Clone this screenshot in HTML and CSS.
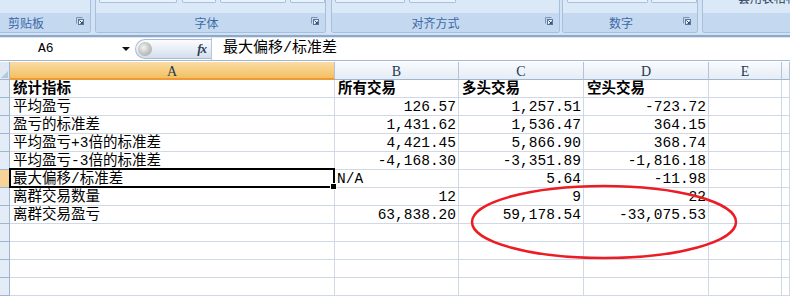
FILE: index.html
```html
<!DOCTYPE html>
<html lang="zh">
<head>
<meta charset="utf-8">
<title>Excel</title>
<link rel="stylesheet" href="styles.css">
</head>
<body>
<div class="ribbon">
  <div class="group g1">
    <div class="gtop"></div>
    <div class="glabel"><span class="lbl l1">剪贴板</span><svg class="launch" width="8" height="8" viewBox="0 0 8 8"><path d="M0.5 6.5V0.5H6.5" fill="none" stroke="#7d93b2"/><rect x="2.5" y="2.5" width="5" height="5" fill="#e9f0f9" stroke="#5b7399"/><path d="M3.5 3.5L6.5 6.5M6.5 4.5V6.5H4.5" fill="none" stroke="#2d4f80"/></svg></div>
  </div>
  <div class="group g2">
    <div class="gtop"><i class="btn" style="margin-left:3px;width:78px"></i><i class="btn" style="margin-left:5px;width:33px"></i><i class="btn" style="margin-left:4px;width:66px"></i><i class="btn" style="margin-left:4px;width:34px"></i></div>
    <div class="glabel"><span class="lbl">字体</span><svg class="launch" width="8" height="8" viewBox="0 0 8 8"><path d="M0.5 6.5V0.5H6.5" fill="none" stroke="#7d93b2"/><rect x="2.5" y="2.5" width="5" height="5" fill="#e9f0f9" stroke="#5b7399"/><path d="M3.5 3.5L6.5 6.5M6.5 4.5V6.5H4.5" fill="none" stroke="#2d4f80"/></svg></div>
  </div>
  <div class="group g3">
    <div class="gtop"><i class="btn" style="margin-left:3px;width:68px"></i><i class="btn" style="margin-left:4px;width:45px"></i></div>
    <div class="glabel"><span class="lbl">对齐方式</span><svg class="launch" width="8" height="8" viewBox="0 0 8 8"><path d="M0.5 6.5V0.5H6.5" fill="none" stroke="#7d93b2"/><rect x="2.5" y="2.5" width="5" height="5" fill="#e9f0f9" stroke="#5b7399"/><path d="M3.5 3.5L6.5 6.5M6.5 4.5V6.5H4.5" fill="none" stroke="#2d4f80"/></svg></div>
  </div>
  <div class="group g4">
    <div class="gtop"><i class="btn" style="margin-left:4px;width:80px"></i><i class="btn" style="margin-left:3px;width:44px"></i></div>
    <div class="glabel"><span class="lbl">数字</span><svg class="launch" width="8" height="8" viewBox="0 0 8 8"><path d="M0.5 6.5V0.5H6.5" fill="none" stroke="#7d93b2"/><rect x="2.5" y="2.5" width="5" height="5" fill="#e9f0f9" stroke="#5b7399"/><path d="M3.5 3.5L6.5 6.5M6.5 4.5V6.5H4.5" fill="none" stroke="#2d4f80"/></svg></div>
  </div>
  <div class="group g5">
    <div class="gtop"><span class="cut">套用表格格式</span></div>
    <div class="glabel"></div>
  </div>
</div>
<div class="rline"></div>
<div class="fbar">
  <div class="namebox"><span class="nm">A6</span><span class="drop"></span></div>
  <div class="fxbtn"><span class="ball"></span><span class="fx">fx</span></div>
  <div class="finput">最大偏移/标准差</div>
</div>
<div class="sheet">
  <div class="corner"></div><div class="ch on">A</div><div class="ch">B</div><div class="ch">C</div><div class="ch">D</div><div class="ch">E</div><div class="ch"></div>

  <div class="rh"></div><div class="c b">统计指标</div><div class="c b">所有交易</div><div class="c b">多头交易</div><div class="c b">空头交易</div><div class="c"></div><div class="c"></div>
  <div class="rh"></div><div class="c">平均盈亏</div><div class="c n">126.57</div><div class="c n">1,257.51</div><div class="c n">-723.72</div><div class="c"></div><div class="c"></div>
  <div class="rh"></div><div class="c">盈亏的标准差</div><div class="c n">1,431.62</div><div class="c n">1,536.47</div><div class="c n">364.15</div><div class="c"></div><div class="c"></div>
  <div class="rh"></div><div class="c">平均盈亏+3倍的标准差</div><div class="c n">4,421.45</div><div class="c n">5,866.90</div><div class="c n">368.74</div><div class="c"></div><div class="c"></div>
  <div class="rh"></div><div class="c">平均盈亏-3倍的标准差</div><div class="c n">-4,168.30</div><div class="c n">-3,351.89</div><div class="c n">-1,816.18</div><div class="c"></div><div class="c"></div>
  <div class="rh on"></div><div class="c sel">最大偏移/标准差</div><div class="c na">N/A</div><div class="c n">5.64</div><div class="c n">-11.98</div><div class="c"></div><div class="c"></div>
  <div class="rh"></div><div class="c">离群交易数量</div><div class="c n">12</div><div class="c n">9</div><div class="c n">22</div><div class="c"></div><div class="c"></div>
  <div class="rh"></div><div class="c">离群交易盈亏</div><div class="c n">63,838.20</div><div class="c n">59,178.54</div><div class="c n">-33,075.53</div><div class="c"></div><div class="c"></div>
  <div class="rh"></div><div class="c"></div><div class="c"></div><div class="c"></div><div class="c"></div><div class="c"></div><div class="c"></div>
  <div class="rh"></div><div class="c"></div><div class="c"></div><div class="c"></div><div class="c"></div><div class="c"></div><div class="c"></div>
  <div class="rh"></div><div class="c"></div><div class="c"></div><div class="c"></div><div class="c"></div><div class="c"></div><div class="c"></div>
  <div class="rh"></div><div class="c"></div><div class="c"></div><div class="c"></div><div class="c"></div><div class="c"></div><div class="c"></div>
</div>
<svg class="mark" width="790" height="297" viewBox="0 0 790 297"><ellipse cx="604" cy="222" rx="132" ry="36" fill="none" stroke="#ec1c24" stroke-width="2.5"/></svg>
</body>
</html>
```
FILE: styles.css
```css
html, body {
  margin: 0;
  padding: 0;
}
body {
  width: 790px;
  height: 297px;
  overflow: hidden;
  background: #ffffff;
  position: relative;
  font-family: "Liberation Mono", "Noto Sans CJK SC", monospace;
}

/* ribbon */
.ribbon {
  height: 34px;
  background: #d4e3f4;
  display: flex;
  align-items: flex-start;
  overflow: hidden;
}
.group {
  height: 33px;
  box-sizing: border-box;
  border: 1px solid #a5bfdf;
  border-top: none;
  border-radius: 0 0 3px 3px;
  background: #dbe8f7;
  display: flex;
  flex-direction: column;
  overflow: hidden;
}
.g1 { width: 91px; border-left: none; border-radius: 0 0 3px 0; }
.g2 { width: 231px; margin-left: 4px; }
.g3 { width: 229px; margin-left: 5px; }
.g4 { width: 136px; margin-left: 2px; }
.g5 { flex: 1; margin-left: 4px; border-right: none; border-radius: 0 0 0 3px; }
.gtop {
  height: 13px;
  display: flex;
  align-items: flex-start;
  position: relative;
}
.btn {
  display: block;
  height: 2px;
  border: 1px solid #a9bfdc;
  border-top: none;
  border-radius: 0 0 2px 2px;
  background: #e9f1fa;
}
.cut {
  margin-left: 35px;
  margin-top: -8px;
  font: 12px/12px "Noto Sans CJK SC", sans-serif;
  color: #2c3d55;
  white-space: nowrap;
}
.glabel {
  flex: 1;
  background: #c4d9f0;
  display: flex;
  align-items: center;
  justify-content: center;
  position: relative;
}
.lbl {
  font: 12px/14px "Noto Sans CJK SC", sans-serif;
  color: #3d69a6;
  margin-right: 8px;
}
.l1 { margin-right: 0; position: absolute; left: 8px; top: 3px; }
.g3 .lbl { margin-right: 20px; }
.g4 .lbl { margin-right: 18px; }
.launch {
  position: absolute;
  right: 6px;
  top: 4px;
}

.rline {
  height: 3px;
  background: linear-gradient(#cfe0f3 0, #cfe0f3 1px, #8ea8c9 1px, #8ea8c9 3px);
}

/* formula bar */
.fbar {
  height: 24px;
  box-sizing: border-box;
  background: #ffffff;
  border-top: 1px solid #dce7f4;
  border-bottom: 1px solid #a4b8d1;
  display: flex;
  align-items: stretch;
}
.namebox {
  width: 133px;
  display: flex;
  align-items: center;
  position: relative;
}
.nm {
  margin-left: 38px;
  font: 13px/16px "Liberation Mono", monospace;
  color: #000;
}
.drop {
  position: absolute;
  left: 122px;
  top: 9px;
  width: 0;
  height: 0;
  border-left: 4px solid transparent;
  border-right: 4px solid transparent;
  border-top: 4px solid #111;
}
.fxbtn {
  width: 76px;
  margin: 1px 0 1px 2px;
  box-sizing: border-box;
  border: 1px solid #a9bad1;
  border-right: none;
  border-radius: 11px 0 0 11px;
  background: linear-gradient(#fbfcfe, #e6edf6 55%, #d2deec);
  display: flex;
  align-items: center;
  justify-content: space-between;
}
.ball {
  width: 14px;
  height: 14px;
  margin-left: 2px;
  border-radius: 50%;
  background: radial-gradient(circle at 40% 40%, #f4f4f4 0, #c9c9c9 45%, #9b9ea3 100%);
}
.fx {
  margin-right: 5px;
  font: italic bold 13px/14px "Liberation Serif", serif;
  color: #2d3e58;
  letter-spacing: -1px;
}
.finput {
  flex: 1;
  border-left: 1px solid #b8c6d8;
  padding-left: 11px;
  font: 15px/21px "Liberation Mono", "Noto Sans CJK SC", monospace;
  color: #000;
  white-space: nowrap;
}

/* sheet */
.sheet {
  margin-top: 1px;
  display: grid;
  grid-template-columns: 10px 325px 124px 125px 125px 73px 1fr;
  grid-auto-rows: 18px;
}
.corner {
  box-sizing: border-box;
  background: #dfe8f3;
  border-right: 1px solid #9eb6ce;
  border-bottom: 1px solid #9eb6ce;
  position: relative;
}
.corner::after {
  content: "";
  position: absolute;
  right: 1px;
  bottom: 1px;
  border-left: 7px solid transparent;
  border-bottom: 7px solid #b7c7da;
}
.ch {
  box-sizing: border-box;
  background: linear-gradient(#f8fafd, #e6edf6);
  border-right: 1px solid #b3c4d9;
  border-bottom: 1px solid #9eb6ce;
  text-align: center;
  padding-top: 2px;
  font: 14px/15px "Liberation Serif", serif;
  color: #263850;
}
.ch.on {
  background: linear-gradient(#fadcA5, #f3c060);
  border-bottom: 2px solid #f0993a;
}
.rh {
  box-sizing: border-box;
  background: #e4ecf7;
  border-right: 1px solid #9eb6ce;
  border-bottom: 1px solid #9eb6ce;
}
.rh.on {
  background: #f8d398;
}
.c {
  box-sizing: border-box;
  border-right: 1px solid #d0d7e5;
  border-bottom: 1px solid #d0d7e5;
  padding: 1px 2px 0 3px;
  font-size: 14.5px;
  line-height: 16px;
  color: #000;
  white-space: nowrap;
  overflow: hidden;
}
.c.b { font-weight: 700; }
.c.n { text-align: right; }
.c.na { padding-left: 2px; }
.c.sel {
  overflow: visible;
  position: relative;
}
.c.sel::after {
  content: "";
  position: absolute;
  left: -1px;
  top: -2px;
  right: -1px;
  bottom: -1px;
  border: 2px solid #000;
}
.c.sel::before {
  content: "";
  position: absolute;
  right: -3px;
  bottom: -3px;
  width: 5px;
  height: 5px;
  background: #000;
  border: 1px solid #fff;
  z-index: 2;
}

.mark {
  position: absolute;
  left: 0;
  top: 0;
  pointer-events: none;
}
```
